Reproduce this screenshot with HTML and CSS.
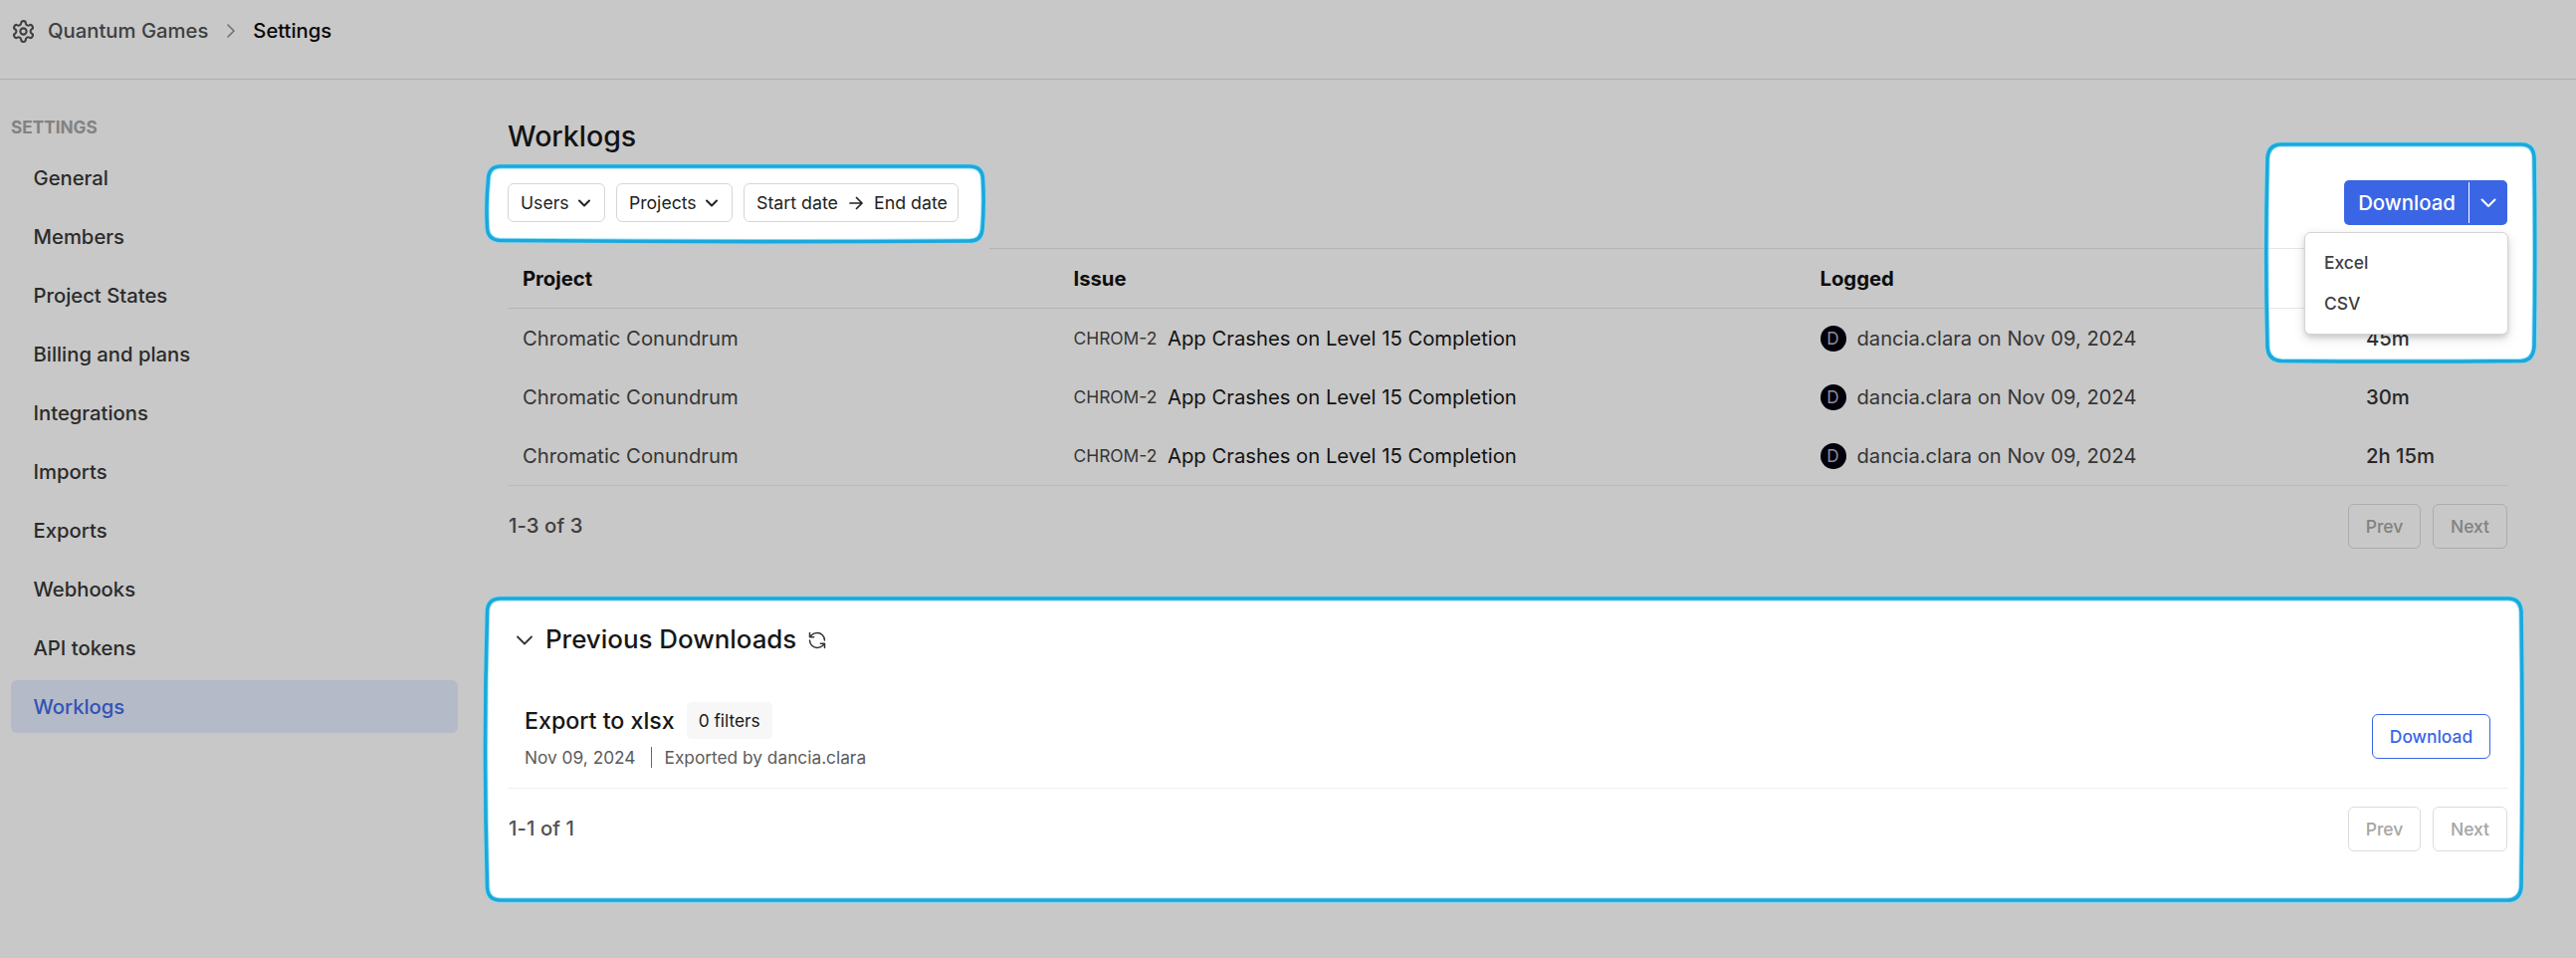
FILE: index.html
```
<!DOCTYPE html>
<html lang="en">
<head>
<meta charset="utf-8">
<title>Worklogs - Settings</title>
<link rel="stylesheet" href="styles.css">
</head>
<body>
<header class="topbar">
  <svg class="icon gear" viewBox="0 0 24 24"><path d="M12.22 2h-.44a2 2 0 0 0-2 2v.18a2 2 0 0 1-1 1.73l-.43.25a2 2 0 0 1-2 0l-.15-.08a2 2 0 0 0-2.73.73l-.22.38a2 2 0 0 0 .73 2.73l.15.1a2 2 0 0 1 1 1.72v.51a2 2 0 0 1-1 1.74l-.15.09a2 2 0 0 0-.73 2.73l.22.38a2 2 0 0 0 2.73.73l.15-.08a2 2 0 0 1 2 0l.43.25a2 2 0 0 1 1 1.73V20a2 2 0 0 0 2 2h.44a2 2 0 0 0 2-2v-.18a2 2 0 0 1 1-1.73l.43-.25a2 2 0 0 1 2 0l.15.08a2 2 0 0 0 2.73-.73l.22-.39a2 2 0 0 0-.73-2.73l-.15-.08a2 2 0 0 1-1-1.74v-.5a2 2 0 0 1 1-1.74l.15-.09a2 2 0 0 0 .73-2.73l-.22-.38a2 2 0 0 0-2.73-.73l-.15.08a2 2 0 0 1-2 0l-.43-.25a2 2 0 0 1-1-1.73V4a2 2 0 0 0-2-2z"/><circle cx="12" cy="12" r="3"/></svg>
  <span class="crumb">Quantum Games</span>
  <svg class="icon crumb-sep" viewBox="0 0 8 14"><path d="M1 1l6 6-6 6"/></svg>
  <span class="crumb current">Settings</span>
</header>
<div class="layout">
  <aside class="sidebar">
    <h2 class="sidebar-title">SETTINGS</h2>
    <nav class="nav">
      <a class="nav-item">General</a>
      <a class="nav-item">Members</a>
      <a class="nav-item">Project States</a>
      <a class="nav-item">Billing and plans</a>
      <a class="nav-item">Integrations</a>
      <a class="nav-item">Imports</a>
      <a class="nav-item">Exports</a>
      <a class="nav-item">Webhooks</a>
      <a class="nav-item">API tokens</a>
      <a class="nav-item active">Worklogs</a>
    </nav>
  </aside>
  <main class="main">
    <h1 class="title">Worklogs</h1>
    <div class="toolbar">
      <div class="filters">
        <button class="filter users">Users<svg class="icon chev-s" viewBox="0 0 12 8"><path d="M1 1.5l5 5 5-5"/></svg></button>
        <button class="filter projects">Projects<svg class="icon chev-s" viewBox="0 0 12 8"><path d="M1 1.5l5 5 5-5"/></svg></button>
        <button class="filter dates">Start date<svg class="icon arrow" viewBox="0 0 14 14"><path d="M1 7h12M7.5 1.5L13 7l-5.5 5.5"/></svg>End date</button>
      </div>
      <div class="split">
        <button class="split-main">Download</button>
        <button class="split-toggle"><svg class="icon chev-m" viewBox="0 0 16 10"><path d="M1.5 1.5L8 8l6.500-6.500"/></svg></button>
        <div class="menu">
          <div class="menu-item">Excel</div>
          <div class="menu-item">CSV</div>
        </div>
      </div>
    </div>
    <div class="table">
      <div class="row head"><div>Project</div><div>Issue</div><div>Logged</div><div></div></div>
      <div class="row"><div>Chromatic Conundrum</div><div class="issue"><span class="key">CHROM-2</span>App Crashes on Level 15 Completion</div><div class="logged"><span class="avatar">D</span>dancia.clara on Nov 09, 2024</div><div class="time">45m</div></div>
      <div class="row"><div>Chromatic Conundrum</div><div class="issue"><span class="key">CHROM-2</span>App Crashes on Level 15 Completion</div><div class="logged"><span class="avatar">D</span>dancia.clara on Nov 09, 2024</div><div class="time">30m</div></div>
      <div class="row"><div>Chromatic Conundrum</div><div class="issue"><span class="key">CHROM-2</span>App Crashes on Level 15 Completion</div><div class="logged"><span class="avatar">D</span>dancia.clara on Nov 09, 2024</div><div class="time">2h 15m</div></div>
    </div>
    <div class="pager">
      <span class="count">1-3 of 3</span>
      <div class="pager-buttons"><button class="page-btn prev">Prev</button><button class="page-btn next">Next</button></div>
    </div>
    <section class="downloads">
      <h3 class="downloads-title">
        <svg class="icon chev-l" viewBox="0 0 16 10"><path d="M1 1.500L8 8.500l7-7"/></svg>
        Previous Downloads
        <svg class="icon refresh" viewBox="0 0 24 24"><path d="M21 12a9 9 0 0 0-9-9 9.750 9.750 0 0 0-6.740 2.740L3 8M3 3v5h5M3 12a9 9 0 0 0 9 9 9.750 9.750 0 0 0 6.740-2.740L21 16M16 16h5v5"/></svg>
      </h3>
      <div class="export">
        <div class="export-info">
          <div class="export-name">Export to xlsx<span class="chip">0 filters</span></div>
          <div class="export-meta"><span>Nov 09, 2024</span><span class="bar"></span><span>Exported by dancia.clara</span></div>
        </div>
        <button class="outline-btn">Download</button>
      </div>
      <div class="pager">
        <span class="count">1-1 of 1</span>
        <div class="pager-buttons"><button class="page-btn prev">Prev</button><button class="page-btn next">Next</button></div>
      </div>
    </section>
  </main>
</div>
<!-- dimming layer with three highlighted cut-outs -->
<svg class="spotlight" viewBox="0 0 2588 962">
  <defs>
    <path id="cut-filters" d="M503 167H974Q987 167 987.500 180Q989 205 987 230Q986 242 974 242Q740 243.500 503 241.500Q490 241 489.500 229Q488 205 490.500 180Q491 167 503 167Z"/>
    <path id="cut-download" d="M2292 145H2533Q2545.500 145 2546 158Q2547.500 255 2546 348Q2545 362 2533 362.500Q2412 363.500 2292 362.500Q2279 362 2278 349Q2275.500 255 2278 159Q2279 145 2292 145Z"/>
    <path id="cut-previous" d="M503 601Q1500 599 2520 601Q2532 601 2533 614Q2535 750 2533 890Q2532 904 2519 904Q1500 905.500 503 904Q490 904 489.500 891Q485.500 750 489.500 614Q490 601 503 601Z"/>
    <mask id="holes">
      <rect width="2588" height="962" fill="#fff"/>
      <use href="#cut-filters"/><use href="#cut-download"/><use href="#cut-previous"/>
    </mask>
  </defs>
  <rect width="2588" height="962" fill="#000" fill-opacity=".216" mask="url(#holes)"/>
  <g class="halo"><use href="#cut-filters"/><use href="#cut-download"/><use href="#cut-previous"/></g>
  <g class="outline"><use href="#cut-filters"/><use href="#cut-download"/><use href="#cut-previous"/></g>
</svg>
</body>
</html>
```
FILE: styles.css
```
* { box-sizing: border-box; }
body {
  margin: 0;
  width: 2588px;
  height: 962px;
  overflow: hidden;
  position: relative;
  background: #fff;
  color: #171717;
  font: 400 20.25px/24px Inter, sans-serif;
}
h1, h2, h3 { margin: 0; }
button {
  font: inherit;
  color: inherit;
  background: #fff;
  border: 0;
  margin: 0;
  padding: 0;
  display: flex;
  align-items: center;
}
.icon {
  fill: none;
  stroke: currentColor;
  stroke-width: 2;
  stroke-linecap: round;
  stroke-linejoin: round;
  flex: none;
}

.topbar {
  height: 80px;
  padding: 0 0 18px 11px;
  display: flex;
  align-items: center;
  border-bottom: 1px solid #dedede;
  font-weight: 500;
  color: #525252;
}
.gear { width: 25px; height: 25px; margin-right: 12px; margin-top: 2px; }
.crumb-sep { width: 8px; height: 14px; margin: 1px 18.5px 0 18.5px; stroke-width: 1.600; color: #8f8f8f; }
.current { color: #0a0a0a; }

.layout { display: flex; }
.sidebar { width: 460px; padding: 36px 0 0 11px; }
.sidebar-title {
  font-size: 17.2px;
  font-weight: 700;
  line-height: 24px;
  color: #a6a6a6;
}
.nav { display: flex; flex-direction: column; gap: 6px; padding-top: 12px; }
.nav-item {
  height: 53px;
  padding-left: 22.5px;
  display: flex;
  align-items: center;
  border-radius: 6px;
  font-weight: 500;
  color: #383838;
}
.active { background: #e7edff; color: #3f6be8; }

.main { width: 2010px; margin-left: 50px; padding-top: 40px; }
.title { font-size: 28.5px; line-height: 34px; font-weight: 500; }
.toolbar {
  display: flex;
  justify-content: space-between;
  align-items: center;
  height: 45px;
  margin: 27px 1px 23px 0;
}
.filters { display: flex; gap: 11px; }
.filter {
  height: 39px;
  border: 1px solid #d6d6d6;
  border-radius: 6px;
  padding-left: 12px;
  font-size: 17.6px;
  color: #222;
}
.users { width: 98px; }
.projects { width: 117px; }
.dates { width: 216px; padding-left: 12px; font-size: 17.8px; }
.chev-s { width: 12px; height: 8px; margin-left: 9px; stroke-width: 2; }
.arrow { width: 14px; height: 14px; margin: 0 11px; stroke-width: 1.700; }

.split { position: relative; display: flex; width: 164px; height: 45px; }
.split button { background: #3a66e5; color: #fff; justify-content: center; }
.split-main {
  flex: 1;
  font-size: 20.4px;
  font-weight: 500;
  border-radius: 5px 0 0 5px;
}
.split-toggle {
  width: 38px;
  border-radius: 0 5px 5px 0;
  background-clip: padding-box;
  position: relative;
}
.split-toggle::before {
  content: "";
  position: absolute;
  left: -1px;
  top: 2px;
  bottom: 2px;
  width: 1px;
  background: #fff;
}
.chev-m { width: 16px; height: 10px; stroke-width: 2; }
.menu {
  position: absolute;
  right: -1px;
  top: 52px;
  width: 205px;
  height: 103px;
  padding: 9px 0 0 19px;
  border: 1px solid #d4d4d4;
  border-radius: 6px;
  background: #fff;
  box-shadow: 0 4px 12px rgba(0, 0, 0, .14), 0 3px 4px rgba(0, 0, 0, .1);
}
.menu-item {
  height: 41px;
  display: flex;
  align-items: center;
  font-size: 17.4px;
  font-weight: 500;
  color: #404040;
}

.row {
  display: grid;
  grid-template-columns: 553.500px 750px 548.500px 1fr;
  align-items: center;
  height: 59px;
  padding-left: 15px;
  color: #454545;
}
.head {
  height: 61px;
  padding-top: 2px;
  font-weight: 700;
  color: #111;
  border-bottom: 1px solid #e6e6e6;
  background: linear-gradient(#e6e6e6, #e6e6e6) right top / calc(100% - 484px) 1px no-repeat;
}
.table { border-bottom: 1px solid #efefef; }
.issue { display: flex; align-items: center; color: #171717; }
.key { font-size: 17.4px; color: #454545; width: 94.5px; }
.logged { display: flex; align-items: center; font-size: 20.150px; }
.avatar {
  width: 26px;
  height: 26px;
  margin-right: 11px;
  border-radius: 50%;
  background: #02020f;
  color: #b4b4c8;
  font-size: 17px;
  display: flex;
  align-items: center;
  justify-content: center;
}
.time { font-weight: 500; color: #333; }

.pager {
  display: flex;
  justify-content: space-between;
  align-items: center;
  height: 45px;
  margin: 18px 1px 0 0;
}
.count { font-weight: 500; color: #525252; padding: 0 0 2px 1px; letter-spacing: .1px; }
.pager-buttons { display: flex; gap: 12px; }
.page-btn {
  height: 45px;
  justify-content: center;
  border: 1px solid #dcdcdc;
  border-radius: 6px;
  font-size: 17.5px;
  font-weight: 500;
  color: #a6a6a6;
}
.prev { width: 73px; }
.next { width: 75px; }

.downloads { margin-top: 74px; }
.downloads-title {
  display: flex;
  align-items: center;
  padding-left: 9px;
  font-size: 25.9px;
  line-height: 34px;
  font-weight: 500;
}
.chev-l { width: 16px; height: 10px; margin: 2px 13px 0 0; stroke-width: 1.800; color: #333; }
.refresh { width: 20px; height: 20px; margin: 1px 0 0 11px; stroke-width: 1.800; color: #333; }
.export {
  height: 105px;
  margin-top: 28px;
  padding: 18px 18px 0 17px;
  display: flex;
  justify-content: space-between;
  align-items: flex-start;
  border-bottom: 1px solid #efefef;
}
.export-name {
  display: flex;
  align-items: center;
  gap: 12px;
  height: 37px;
  font-size: 23.200px;
  font-weight: 500;
}
.chip {
  height: 37px;
  padding: 0 12px;
  display: flex;
  align-items: center;
  border-radius: 5px;
  background: #f7f7f7;
  font-size: 17.300px;
  font-weight: 400;
}
.export-meta {
  display: flex;
  align-items: center;
  margin-top: 8px;
  height: 21px;
  font-size: 17.300px;
  color: #5c5c5c;
}
.bar { width: 1px; height: 21px; margin: 0 13px 0 15px; background: #666; }
.outline-btn {
  width: 119px;
  height: 45px;
  margin-top: 12px;
  justify-content: center;
  border: 1px solid #3a66e5;
  border-radius: 6px;
  color: #3a66e5;
  font-size: 17.400px;
  font-weight: 500;
}

.spotlight {
  position: absolute;
  left: 0;
  top: 0;
  width: 2588px;
  height: 962px;
  pointer-events: none;
}
.halo { fill: none; stroke: #7fdcf5; stroke-width: 5.500; stroke-opacity: .7; }
.outline { fill: none; stroke: #1ba8dc; stroke-width: 3.600; }
```
